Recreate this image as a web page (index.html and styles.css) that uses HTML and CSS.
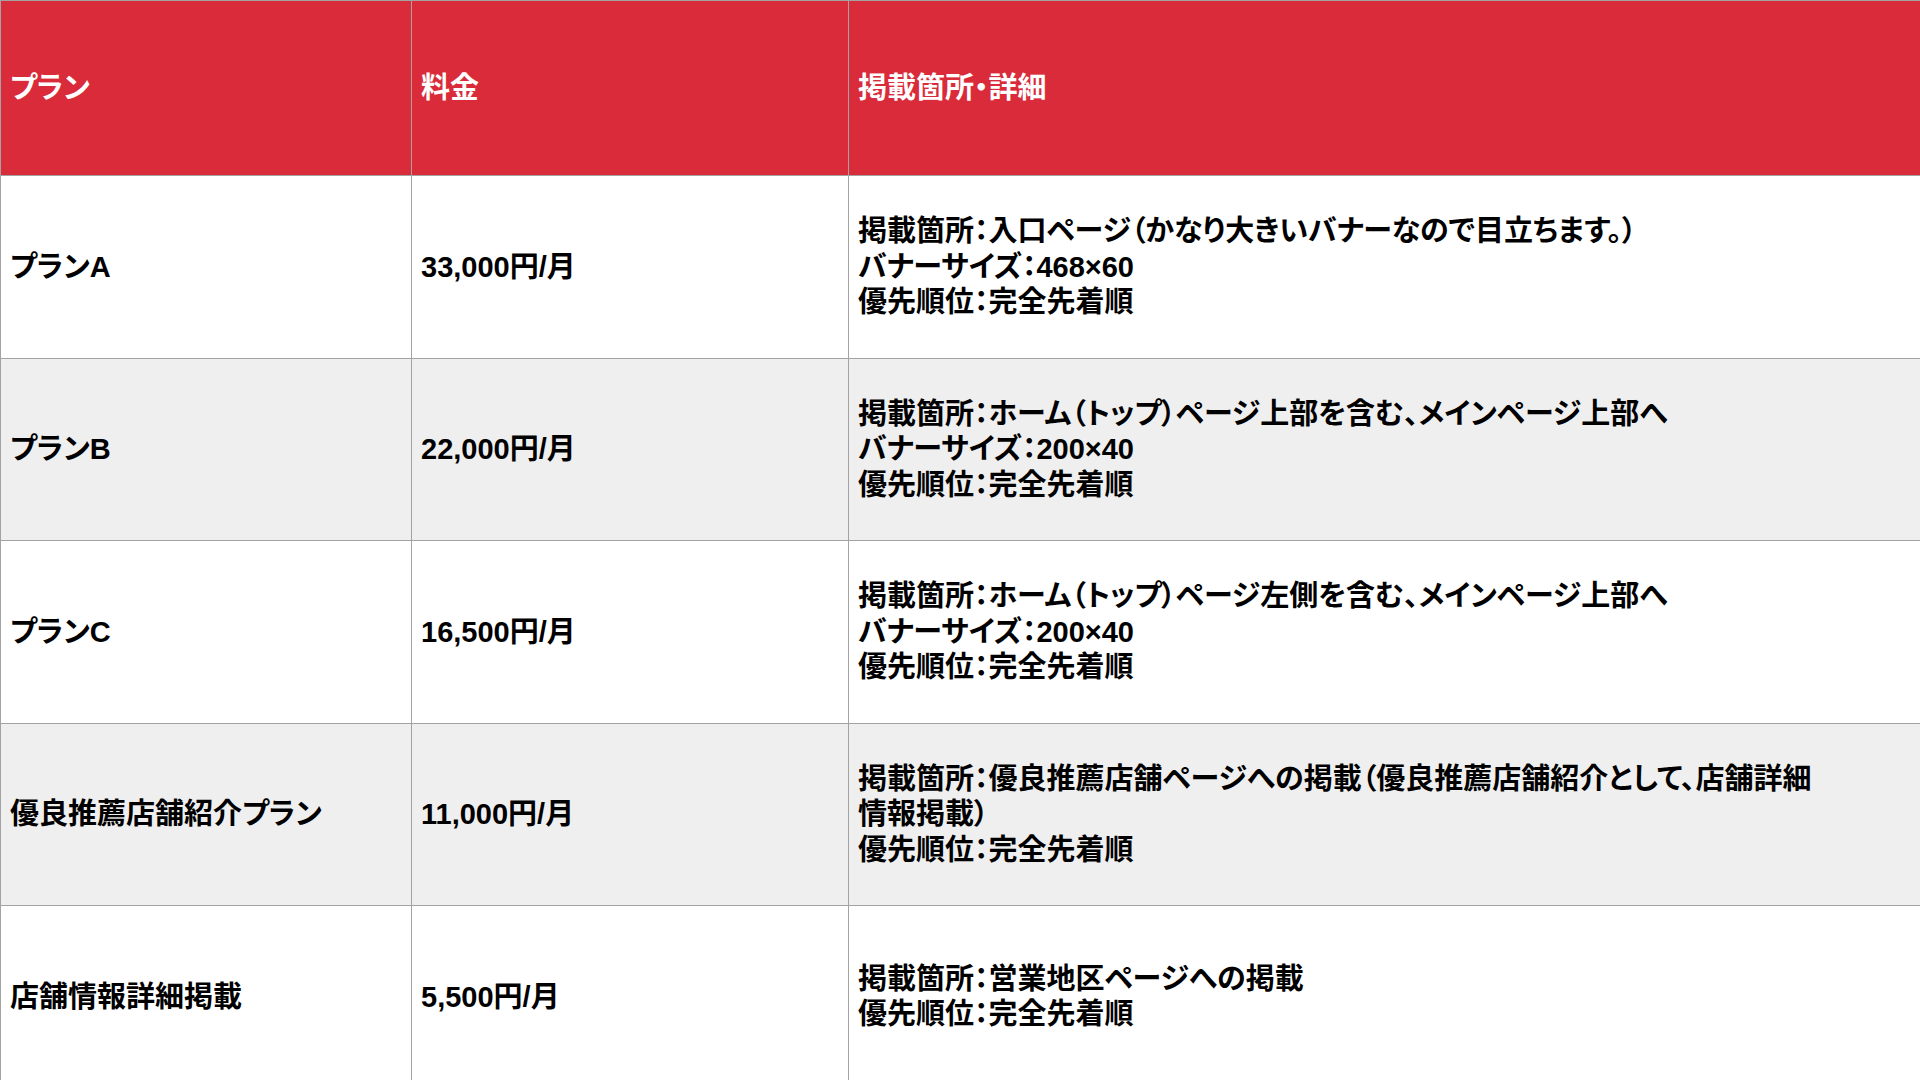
FILE: index.html
```html
<!DOCTYPE html>
<html lang="ja">
<head>
<meta charset="utf-8">
<title>掲載プラン</title>
<link rel="stylesheet" href="styles.css">
</head>
<body>
<table class="plans">
  <colgroup>
    <col class="c-plan">
    <col class="c-price">
    <col class="c-detail">
  </colgroup>
  <thead>
    <tr class="head">
      <th>プラン</th>
      <th>料金</th>
      <th>掲載箇所・詳細</th>
    </tr>
  </thead>
  <tbody>
    <tr class="row">
      <td>プランA</td>
      <td>33,000円/月</td>
      <td>掲載箇所：入口ページ（かなり大きいバナーなので目立ちます。）<br>バナーサイズ：468×60<br>優先順位：完全先着順</td>
    </tr>
    <tr class="row alt">
      <td>プランB</td>
      <td>22,000円/月</td>
      <td>掲載箇所：ホーム（トップ）ページ上部を含む、メインページ上部へ<br>バナーサイズ：200×40<br>優先順位：完全先着順</td>
    </tr>
    <tr class="row">
      <td>プランC</td>
      <td>16,500円/月</td>
      <td>掲載箇所：ホーム（トップ）ページ左側を含む、メインページ上部へ<br>バナーサイズ：200×40<br>優先順位：完全先着順</td>
    </tr>
    <tr class="row alt">
      <td>優良推薦店舗紹介プラン</td>
      <td>11,000円/月</td>
      <td>掲載箇所：優良推薦店舗ページへの掲載（優良推薦店舗紹介として、店舗詳細<br>情報掲載）<br>優先順位：完全先着順</td>
    </tr>
    <tr class="row">
      <td>店舗情報詳細掲載</td>
      <td>5,500円/月</td>
      <td>掲載箇所：営業地区ページへの掲載<br>優先順位：完全先着順</td>
    </tr>
  </tbody>
</table>
</body>
</html>
```
FILE: styles.css
```css
html, body {
  margin: 0;
  padding: 0;
  background: #ffffff;
  overflow: hidden;
}

.plans {
  border-collapse: collapse;
  table-layout: fixed;
  width: 1922px;
  font-family: "Liberation Sans", "Noto Sans CJK JP", sans-serif;
  font-weight: 700;
  font-size: 29px;
  line-height: 35.5px;
  font-feature-settings: "palt";
  color: #000000;
}

.c-plan { width: 411px; }
.c-price { width: 437px; }
.c-detail { width: auto; }

.plans th,
.plans td {
  border: 1px solid #a3a3a3;
  padding: 1px 8px 0 9px;
  text-align: left;
  vertical-align: middle;
  font-weight: 700;
  white-space: nowrap;
}

.head {
  height: 175px;
}

.head th {
  background: #d92b3a;
  color: #ffffff;
}

.row {
  height: 182.5px;
}

.row td {
  background: #ffffff;
}

.row.alt td {
  background: #efefef;
}
```
